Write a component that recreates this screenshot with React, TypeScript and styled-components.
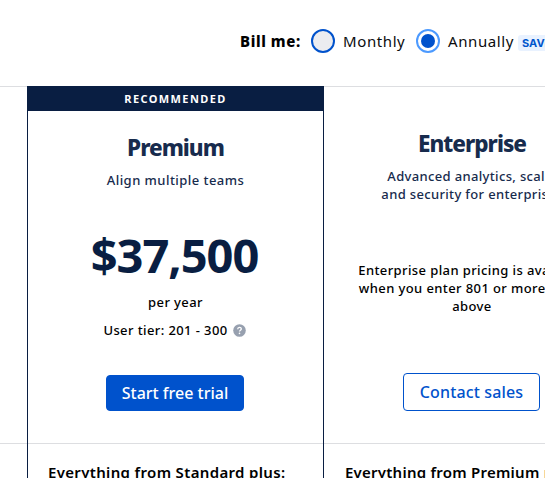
import React from 'react';
import styled, { createGlobalStyle, css } from 'styled-components';

const Global = createGlobalStyle`
  * { box-sizing: border-box; }
  body {
    margin: 0;
    overflow: hidden;
    background: #fff;
    color: #101214;
    font-family: "Noto Sans", "Open Sans", sans-serif;
  }
`;

const Page = styled.main`
  width: 545px;
  height: 478px;
  overflow: hidden;
  display: grid;
  grid-template-rows: 86px 1fr;
`;

const Billing = styled.header`
  display: flex;
  align-items: center;
  height: 82px;
  padding-left: 240px;
  font-size: 15px;
  color: #0b0c0e;
  white-space: nowrap;
`;

const BillingLabel = styled.span`
  width: 71px;
  color: #000;
  font-weight: 800;
  letter-spacing: 0.6px;
`;

const Option = styled.label<{ $width: number }>`
  display: flex;
  flex: none;
  align-items: center;
  gap: 8px;
  width: ${(p) => p.$width}px;
  letter-spacing: 0.6px;
`;

const Radio = styled.span<{ $checked?: boolean }>`
  display: grid;
  flex: none;
  place-items: center;
  width: 24px;
  height: 24px;
  border: 2px solid #0052cc;
  border-radius: 50%;
  background: #ebecf0;
  ${(p) =>
    p.$checked &&
    css`
      border-color: #4c9aff;
      background: #fff;
      &::after {
        content: '';
        width: 14px;
        height: 14px;
        border-radius: 50%;
        background: #0052cc;
      }
    `}
`;

const Badge = styled.span`
  flex: none;
  height: 16px;
  margin-top: 4px;
  padding: 0 4px;
  border-radius: 3px;
  background: #e9f2ff;
  color: #0055cc;
  font: 700 11px/17px Inter, sans-serif;
`;

const Plans = styled.div`
  display: grid;
  grid-template-columns: 27px 297px 296px;
  border-top: 1px solid #dddee1;
  width: 620px;
`;

const Plan = styled.section<{ $recommended?: boolean }>`
  display: grid;
  grid-template-rows: 356px 1fr;
  ${(p) =>
    p.$recommended &&
    css`
      margin-top: -1px;
      grid-template-rows: 357px 1fr;
      border: solid #091e42;
      border-width: 0 1px;
    `}
`;

const Summary = styled.div`
  display: flex;
  flex-direction: column;
  align-items: center;
  text-align: center;
`;

const Ribbon = styled.div`
  align-self: stretch;
  height: 25px;
  background: #091e42;
  color: #fff;
  font-size: 11px;
  font-weight: 700;
  line-height: 26px;
  letter-spacing: 1.4px;
`;

const PlanName = styled.h2<{ $top: number }>`
  margin: ${(p) => p.$top}px 0 0;
  color: #172b4d;
  font-size: 22.5px;
  font-weight: 800;
  line-height: 32px;
  letter-spacing: -1px;
`;

const Tagline = styled.p<{ $tracking?: number }>`
  margin: 7px 0 0;
  height: 54px;
  color: #172b4d;
  font-size: 13px;
  font-weight: 500;
  line-height: 18px;
  letter-spacing: ${(p) => p.$tracking ?? 0.45}px;
`;

const Price = styled.div`
  height: 60px;
  margin-right: 2px;
  color: #091e42;
  font-size: 47px;
  font-weight: 700;
  line-height: 60px;
  letter-spacing: -1px;
`;

const Note = styled.p<{ $top: number }>`
  display: flex;
  align-items: center;
  margin: ${(p) => p.$top}px 0 0;
  color: #000;
  font-size: 13px;
  font-weight: 500;
  line-height: 18px;
  letter-spacing: 0.4px;
`;

const HelpIcon = styled.svg`
  width: 13px;
  height: 13px;
  margin: 0 2px 0 5px;
`;

const Button = styled.button<{ $outline?: boolean }>`
  width: 138px;
  height: 36px;
  margin: 36px 1px 0 0;
  padding: 0;
  border: 1px solid #0052cc;
  border-radius: 4px;
  background: #0052cc;
  color: #fff;
  font: 500 16px/34px "Noto Sans", sans-serif;
  ${(p) =>
    p.$outline &&
    css`
      width: 137px;
      height: 38px;
      margin-top: 58px;
      background: #fff;
      color: #0052cc;
      line-height: 36px;
      letter-spacing: 0.15px;
    `}
`;

const Features = styled.div<{ $inset?: number; $tracking?: number }>`
  border-top: 1px solid #dddee1;
  padding: 18px 0 0 ${(p) => p.$inset ?? 20}px;
  font-size: 15px;
  font-weight: 600;
  line-height: 20px;
  letter-spacing: ${(p) => p.$tracking ?? 0.34}px;
  color: #000;
  white-space: nowrap;
`;

export default function App() {
  return (
    <>
      <Global />
      <Page>
        <Billing>
          <BillingLabel>Bill me:</BillingLabel>
          <Option $width={105}>
            <Radio />
            Monthly
          </Option>
          <Option $width={102}>
            <Radio $checked />
            Annually
          </Option>
          <Badge>SAVE</Badge>
        </Billing>
        <Plans>
          <Plan>
            <Summary />
            <Features />
          </Plan>
          <Plan $recommended>
            <Summary>
              <Ribbon>RECOMMENDED</Ribbon>
              <PlanName $top={21}>Premium</PlanName>
              <Tagline>Align multiple teams</Tagline>
              <Price>$37,500</Price>
              <Note $top={8}>per year</Note>
              <Note $top={10}>
                User tier: 201 - 300
                <HelpIcon viewBox="0 0 13 13">
                  <circle cx="6.5" cy="6.5" r="6.3" fill="#97a0af" />
                  <path d="M4.7 5.2c0-2.4 3.6-2.4 3.6-.2 0 1.3-1.8 1.3-1.8 2.6" fill="none" stroke="#fff" strokeWidth="1.3" />
                  <circle cx="6.5" cy="9.4" r=".8" fill="#fff" />
                </HelpIcon>
              </Note>
              <Button>Start free trial</Button>
            </Summary>
            <Features>Everything from Standard plus:</Features>
          </Plan>
          <Plan>
            <Summary>
              <PlanName $top={41}>Enterprise</PlanName>
              <Tagline $tracking={0.34}>
                Advanced analytics, scale,
                <br />
                and security for enterprises
              </Tagline>
              <Note $top={40}>
                Enterprise plan pricing is available
                <br />
                when you enter 801 or more users
                <br />
                above
              </Note>
              <Button $outline>Contact sales</Button>
            </Summary>
            <Features $inset={21} $tracking={0.24}>Everything from Premium plus:</Features>
          </Plan>
        </Plans>
      </Page>
    </>
  );
}
